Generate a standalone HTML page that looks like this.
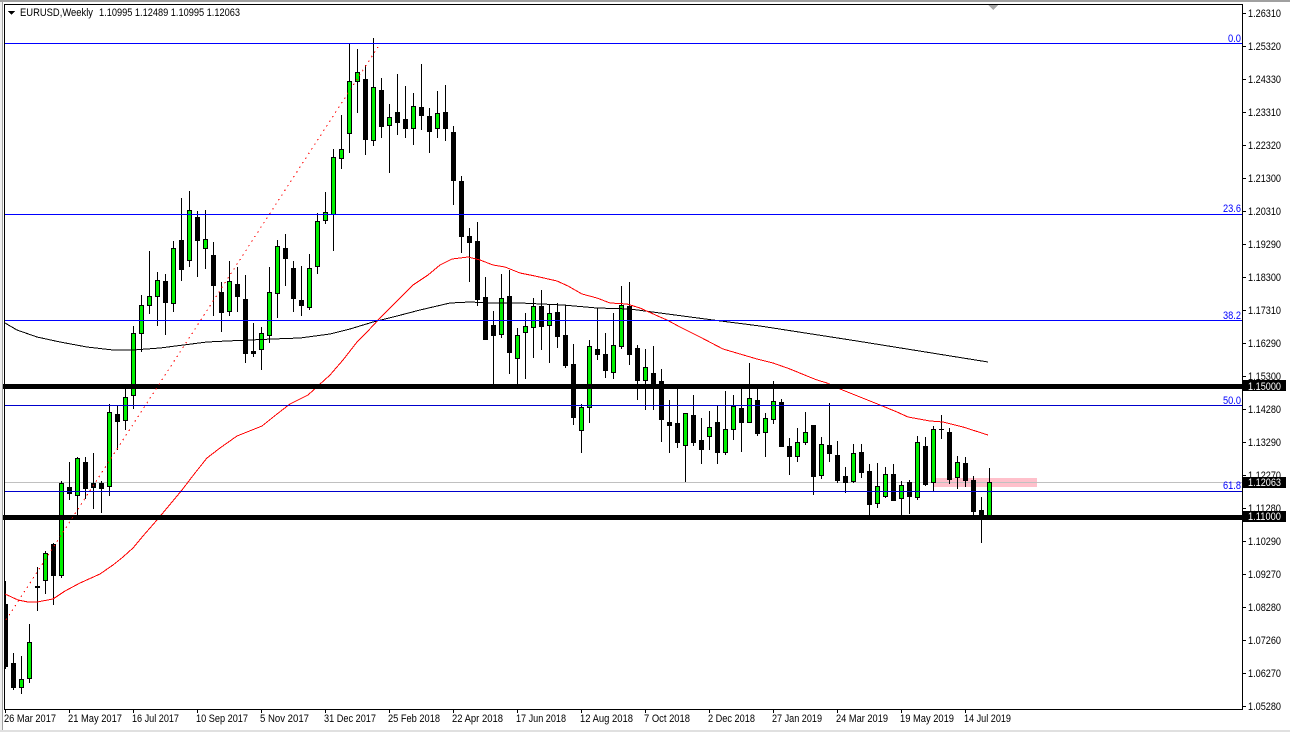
<!DOCTYPE html>
<html><head><meta charset="utf-8"><style>
html,body{margin:0;padding:0;background:#fff;width:1290px;height:732px;overflow:hidden}
svg{display:block;position:absolute;left:0;top:0}
text{font-family:"Liberation Sans",sans-serif;font-size:11px;fill:#000}
.f{fill:#0000ff}
.w{fill:#fff}
</style></head><body>
<svg width="1290" height="732" viewBox="0 0 1290 732" xmlns="http://www.w3.org/2000/svg">
<rect width="1290" height="732" fill="#fff"/>
<g shape-rendering="crispEdges">
<rect x="934" y="478" width="103" height="9" fill="#ffc0cb"/>
<rect x="5" y="482" width="1237" height="1" fill="#c0c0c0"/>
<path stroke="#000" stroke-width="1" fill="none" d="M5.5 581V669M13.5 653V690M21.5 656V694M29.5 624V683M37.5 567V611M45.5 551V594M53.5 543V605M61.5 481V578M69.5 462V500M77.5 457V515M85.5 457V499M93.5 453V509M101.5 481V513M109.5 404V496M117.5 405V450M125.5 388V430M133.5 326V409M141.5 295V352M149.5 251V314M157.5 272V326M165.5 274V335M173.5 241V312M181.5 198V281M189.5 191V267M197.5 211V277M205.5 210V269M213.5 242V316M221.5 282V332M229.5 261V316M237.5 267V312M245.5 275V363M253.5 323V357M261.5 327V370M269.5 267V343M277.5 240V318M285.5 234V286M293.5 261V312M301.5 266V316M309.5 254V310M317.5 213V274M325.5 192V224M333.5 149V251M341.5 115V169M349.5 43V153M357.5 49V113M365.5 65V155M373.5 38V146M381.5 78V138M389.5 104V173M397.5 74V135M405.5 86V138M413.5 93V145M421.5 64V130M429.5 108V153M437.5 91V138M445.5 85V141M453.5 126V205M461.5 176V253M469.5 228V282M477.5 222V306M485.5 277V340M493.5 311V385M501.5 274V338M509.5 270V374M517.5 328V385M525.5 313V379M533.5 298V358M541.5 290V350M549.5 305V363M557.5 303V348M565.5 305V368M573.5 344V425M581.5 404V453M589.5 340V423M597.5 308V360M605.5 333V378M613.5 313V379M621.5 286V349M629.5 282V365M637.5 345V400M645.5 349V410M653.5 346V410M661.5 369V442M669.5 400V453M677.5 389V448M685.5 413V482M693.5 395V446M701.5 418V464M709.5 411V450M717.5 406V464M725.5 391V455M733.5 395V440M741.5 389V452M749.5 363V422M757.5 388V436M765.5 413V457M773.5 381V424M781.5 399V447M789.5 438V475M797.5 428V462M805.5 412V445M813.5 425V495M821.5 437V479M829.5 403V462M837.5 441V483M845.5 467V493M853.5 444V483M861.5 444V478M869.5 464V516M877.5 463V508M885.5 467V498M893.5 464V501M901.5 481V516M909.5 480V514M917.5 436V500M925.5 437V486M933.5 426V492M941.5 415V439M949.5 428V484M957.5 456V489M965.5 457V487M973.5 476V516M981.5 497V543M989.5 468V516"/>
<path fill="#000" d="M5 604h3v63h-3zM11 663h5v25h-5zM35 586h5v2h-5zM51 544h5v32h-5zM67 487h5v7h-5zM83 462h5v27h-5zM91 483h5v5h-5zM99 483h5v6h-5zM115 414h5v8h-5zM163 281h5v22h-5zM179 240h5v30h-5zM195 217h5v24h-5zM211 255h5v31h-5zM219 292h5v21h-5zM235 284h5v13h-5zM243 299h5v55h-5zM251 351h5v3h-5zM283 248h5v11h-5zM291 268h5v31h-5zM299 300h5v6h-5zM363 79h5v61h-5zM379 90h5v37h-5zM395 112h5v11h-5zM403 119h5v10h-5zM419 107h5v9h-5zM427 116h5v16h-5zM443 112h5v17h-5zM451 132h5v49h-5zM459 181h5v56h-5zM467 236h5v7h-5zM475 241h5v59h-5zM483 297h5v43h-5zM491 325h5v11h-5zM507 296h5v57h-5zM539 306h5v21h-5zM555 312h5v25h-5zM563 335h5v31h-5zM571 364h5v54h-5zM595 349h5v6h-5zM603 354h5v17h-5zM627 306h5v49h-5zM635 348h5v33h-5zM651 373h5v11h-5zM659 381h5v39h-5zM667 422h5v4h-5zM675 423h5v20h-5zM691 415h5v28h-5zM699 440h5v10h-5zM715 422h5v31h-5zM739 408h5v15h-5zM755 400h5v34h-5zM779 402h5v45h-5zM787 446h5v11h-5zM811 425h5v52h-5zM827 445h5v9h-5zM835 455h5v26h-5zM843 476h5v7h-5zM859 452h5v21h-5zM867 471h5v34h-5zM891 474h5v27h-5zM907 482h5v15h-5zM923 446h5v39h-5zM939 429h5v1h-5zM947 432h5v48h-5zM963 463h5v18h-5zM971 480h5v32h-5zM979 510h5v6h-5z"/>
<path fill="#00f000" stroke="#000" stroke-width="1" d="M19.5 679.5h4v8h-4zM27.5 642.5h4v36h-4zM43.5 553.5h4v27h-4zM59.5 483.5h4v92h-4zM75.5 458.5h4v37h-4zM107.5 412.5h4v74h-4zM123.5 397.5h4v23h-4zM131.5 333.5h4v62h-4zM139.5 305.5h4v28h-4zM147.5 296.5h4v9h-4zM155.5 280.5h4v16h-4zM171.5 248.5h4v55h-4zM187.5 210.5h4v50h-4zM203.5 239.5h4v9h-4zM227.5 281.5h4v30h-4zM259.5 333.5h4v16h-4zM267.5 292.5h4v43h-4zM275.5 246.5h4v47h-4zM307.5 268.5h4v39h-4zM315.5 221.5h4v45h-4zM323.5 212.5h4v8h-4zM331.5 157.5h4v57h-4zM339.5 149.5h4v9h-4zM347.5 81.5h4v52h-4zM355.5 72.5h4v9h-4zM371.5 87.5h4v53h-4zM387.5 117.5h4v8h-4zM411.5 106.5h4v22h-4zM435.5 113.5h4v15h-4zM499.5 298.5h4v36h-4zM515.5 335.5h4v23h-4zM523.5 326.5h4v6h-4zM531.5 306.5h4v21h-4zM547.5 313.5h4v12h-4zM579.5 407.5h4v23h-4zM587.5 346.5h4v61h-4zM611.5 345.5h4v27h-4zM619.5 305.5h4v41h-4zM643.5 367.5h4v13h-4zM683.5 413.5h4v32h-4zM707.5 427.5h4v9h-4zM723.5 429.5h4v23h-4zM731.5 406.5h4v23h-4zM747.5 398.5h4v24h-4zM763.5 418.5h4v14h-4zM771.5 401.5h4v18h-4zM795.5 442.5h4v14h-4zM803.5 432.5h4v10h-4zM819.5 444.5h4v31h-4zM851.5 453.5h4v28h-4zM875.5 486.5h4v17h-4zM883.5 474.5h4v22h-4zM899.5 485.5h4v13h-4zM915.5 442.5h4v55h-4zM931.5 429.5h4v53h-4zM955.5 462.5h4v15h-4zM987.5 482.5h4v33h-4z"/>
<polyline fill="none" stroke="#000" stroke-width="1" points="5,323 17,330 37,337 60,342 87,347 113,350 133,350 160,348 207,342 227,341 273,339 300,338 330,334 350,329 373,322 397,316 420,310 450,303 470,302 490,303 520,303 563,305 597,308 630,309 660,313 713,320 760,326 857,341 988,362"/>
<polyline fill="none" stroke="#f00" stroke-width="1" points="5,594 18,600 28,602 37,602 53,599 65,591 80,583 100,574 113,565 123,557 133,548 143,536 157,520 167,508 182,490 195,473 207,458 220,448 237,436 262,426 277,414 290,404 308,395 330,375 343,360 357,342 367,332 380,318 400,298 413,285 428,275 440,265 452,259 468,257 480,260 493,265 505,267 520,273 535,276 557,281 568,286 582,294 597,298 610,303 627,304 640,308 660,317 667,320 680,327 700,337 723,349 740,354 757,359 773,363 790,369 807,376 817,380 827,383 840,389 860,397 880,405 897,412 908,417 930,421 943,422 963,427 988,435"/>
<rect x="5" y="43" width="1237" height="1" fill="#0000ff"/>
<rect x="5" y="214" width="1237" height="1" fill="#0000ff"/>
<rect x="5" y="320" width="1237" height="1" fill="#0000ff"/>
<rect x="5" y="405" width="1237" height="1" fill="#0000cc"/>
<rect x="5" y="491" width="1237" height="1" fill="#0000cc"/>
<rect x="3" y="384" width="1239" height="5" fill="#000"/>
<rect x="3" y="515" width="1239" height="5" fill="#000"/>
<line x1="6" y1="620" x2="378" y2="47" stroke="#f00" stroke-width="1" stroke-dasharray="1.500 4"/>
<rect x="0" y="0" width="1290" height="2" fill="#a0a0a0"/>
<rect x="2" y="2" width="1" height="728" fill="#a0a0a0"/>
<rect x="0" y="2" width="2" height="730" fill="#f0f0f0"/>
<rect x="0" y="730" width="1290" height="2" fill="#e0e0e0"/>
<rect x="4" y="4" width="1239" height="1" fill="#000"/>
<rect x="4" y="4" width="1" height="706" fill="#000"/>
<rect x="4" y="709" width="1239" height="1" fill="#000"/>
<rect x="1242" y="4" width="1" height="706" fill="#000"/>
<path fill="#000" d="M1243 13h3v1h-3zM1243 46h3v1h-3zM1243 79h3v1h-3zM1243 112h3v1h-3zM1243 145h3v1h-3zM1243 178h3v1h-3zM1243 211h3v1h-3zM1243 244h3v1h-3zM1243 277h3v1h-3zM1243 310h3v1h-3zM1243 343h3v1h-3zM1243 376h3v1h-3zM1243 409h3v1h-3zM1243 442h3v1h-3zM1243 475h3v1h-3zM1243 508h3v1h-3zM1243 541h3v1h-3zM1243 574h3v1h-3zM1243 607h3v1h-3zM1243 640h3v1h-3zM1243 673h3v1h-3zM1243 706h3v1h-3z"/>
<path fill="#000" d="M5 710h1v3h-1zM69 710h1v3h-1zM133 710h1v3h-1zM197 710h1v3h-1zM261 710h1v3h-1zM325 710h1v3h-1zM389 710h1v3h-1zM453 710h1v3h-1zM517 710h1v3h-1zM581 710h1v3h-1zM645 710h1v3h-1zM709 710h1v3h-1zM773 710h1v3h-1zM837 710h1v3h-1zM901 710h1v3h-1zM965 710h1v3h-1z"/>
<path fill="#a8a8a8" d="M988 5h10l-5 5z"/>
<path fill="#000" d="M8 11h7l-3.500 4z"/>
</g>
<text x="20" y="16" textLength="73" lengthAdjust="spacingAndGlyphs">EURUSD,Weekly</text>
<text x="99" y="16" textLength="141" lengthAdjust="spacingAndGlyphs">1.10995 1.12489 1.10995 1.12063</text>
<g>
<text x="1248" y="17" textLength="33" lengthAdjust="spacingAndGlyphs">1.26310</text>
<text x="1248" y="50" textLength="33" lengthAdjust="spacingAndGlyphs">1.25320</text>
<text x="1248" y="83" textLength="33" lengthAdjust="spacingAndGlyphs">1.24330</text>
<text x="1248" y="116" textLength="33" lengthAdjust="spacingAndGlyphs">1.23310</text>
<text x="1248" y="149" textLength="33" lengthAdjust="spacingAndGlyphs">1.22320</text>
<text x="1248" y="182" textLength="33" lengthAdjust="spacingAndGlyphs">1.21300</text>
<text x="1248" y="215" textLength="33" lengthAdjust="spacingAndGlyphs">1.20310</text>
<text x="1248" y="248" textLength="33" lengthAdjust="spacingAndGlyphs">1.19290</text>
<text x="1248" y="281" textLength="33" lengthAdjust="spacingAndGlyphs">1.18300</text>
<text x="1248" y="314" textLength="33" lengthAdjust="spacingAndGlyphs">1.17310</text>
<text x="1248" y="347" textLength="33" lengthAdjust="spacingAndGlyphs">1.16290</text>
<text x="1248" y="380" textLength="33" lengthAdjust="spacingAndGlyphs">1.15300</text>
<text x="1248" y="413" textLength="33" lengthAdjust="spacingAndGlyphs">1.14280</text>
<text x="1248" y="446" textLength="33" lengthAdjust="spacingAndGlyphs">1.13290</text>
<text x="1248" y="479" textLength="33" lengthAdjust="spacingAndGlyphs">1.12270</text>
<text x="1248" y="512" textLength="33" lengthAdjust="spacingAndGlyphs">1.11280</text>
<text x="1248" y="545" textLength="33" lengthAdjust="spacingAndGlyphs">1.10290</text>
<text x="1248" y="578" textLength="33" lengthAdjust="spacingAndGlyphs">1.09270</text>
<text x="1248" y="611" textLength="33" lengthAdjust="spacingAndGlyphs">1.08280</text>
<text x="1248" y="644" textLength="33" lengthAdjust="spacingAndGlyphs">1.07260</text>
<text x="1248" y="677" textLength="33" lengthAdjust="spacingAndGlyphs">1.06270</text>
<text x="1248" y="710" textLength="33" lengthAdjust="spacingAndGlyphs">1.05280</text>
</g>
<g shape-rendering="crispEdges" fill="#000">
<rect x="1243" y="380" width="43" height="11"/>
<rect x="1243" y="477" width="43" height="11"/>
<rect x="1243" y="511" width="43" height="11"/>
</g>
<text class="w" x="1248" y="390" textLength="33" lengthAdjust="spacingAndGlyphs">1.15000</text>
<text class="w" x="1248" y="486" textLength="33" lengthAdjust="spacingAndGlyphs">1.12063</text>
<text class="w" x="1248" y="520" textLength="33" lengthAdjust="spacingAndGlyphs">1.11000</text>
<text class="f" x="1228" y="42" textLength="13" lengthAdjust="spacingAndGlyphs">0.0</text>
<text class="f" x="1223" y="212" textLength="18" lengthAdjust="spacingAndGlyphs">23.6</text>
<text class="f" x="1223" y="319" textLength="18" lengthAdjust="spacingAndGlyphs">38.2</text>
<text class="f" x="1223" y="404" textLength="18" lengthAdjust="spacingAndGlyphs">50.0</text>
<text class="f" x="1223" y="489" textLength="18" lengthAdjust="spacingAndGlyphs">61.8</text>
<g>
<text x="4" y="722" textLength="52" lengthAdjust="spacingAndGlyphs">26 Mar 2017</text>
<text x="68" y="722" textLength="54" lengthAdjust="spacingAndGlyphs">21 May 2017</text>
<text x="132" y="722" textLength="47" lengthAdjust="spacingAndGlyphs">16 Jul 2017</text>
<text x="196" y="722" textLength="52" lengthAdjust="spacingAndGlyphs">10 Sep 2017</text>
<text x="260" y="722" textLength="49" lengthAdjust="spacingAndGlyphs">5 Nov 2017</text>
<text x="324" y="722" textLength="52" lengthAdjust="spacingAndGlyphs">31 Dec 2017</text>
<text x="388" y="722" textLength="52" lengthAdjust="spacingAndGlyphs">25 Feb 2018</text>
<text x="452" y="722" textLength="51" lengthAdjust="spacingAndGlyphs">22 Apr 2018</text>
<text x="516" y="722" textLength="50" lengthAdjust="spacingAndGlyphs">17 Jun 2018</text>
<text x="580" y="722" textLength="53" lengthAdjust="spacingAndGlyphs">12 Aug 2018</text>
<text x="644" y="722" textLength="46" lengthAdjust="spacingAndGlyphs">7 Oct 2018</text>
<text x="708" y="722" textLength="47" lengthAdjust="spacingAndGlyphs">2 Dec 2018</text>
<text x="772" y="722" textLength="50" lengthAdjust="spacingAndGlyphs">27 Jan 2019</text>
<text x="836" y="722" textLength="52" lengthAdjust="spacingAndGlyphs">24 Mar 2019</text>
<text x="900" y="722" textLength="54" lengthAdjust="spacingAndGlyphs">19 May 2019</text>
<text x="964" y="722" textLength="47" lengthAdjust="spacingAndGlyphs">14 Jul 2019</text>
</g>
</svg>
</body></html>
